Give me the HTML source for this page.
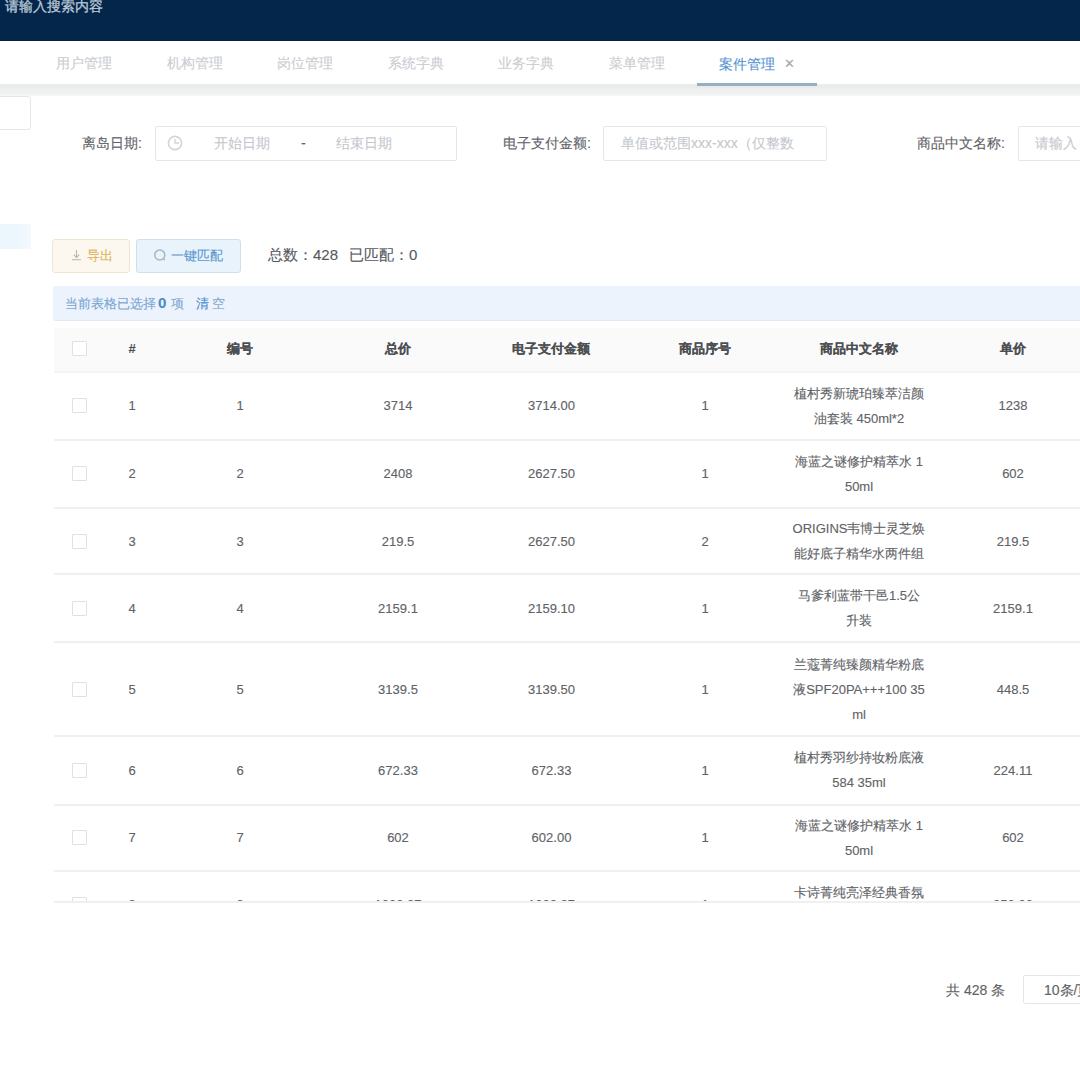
<!DOCTYPE html>
<html><head><meta charset="utf-8">
<style>
*{box-sizing:border-box;margin:0;padding:0}
html,body{width:1080px;height:1077px;overflow:hidden;background:#fff}

.a{-webkit-text-stroke:0.12px currentColor}
body{position:relative;font-family:"Liberation Sans",sans-serif;color:#606266}
.a{position:absolute;white-space:nowrap}
#hdr{left:0;top:0;width:1080px;height:41px;background:#03264a;border-bottom:1px solid #0d1f36}
#title{left:5px;top:-4px;font-size:14px;line-height:20px;color:#bac7d5;-webkit-text-stroke:0.3px #bac7d5}
#tabs{left:0;top:41px;width:1080px;height:43px;background:#fff}
.tab{top:54px;font-size:14px;line-height:18px;color:#cacdd2}
#strip{left:0;top:84px;width:1080px;height:12px;background:linear-gradient(#ebeced 0,#e9eaeb 25%,#eef0f0 45%,#f0f2f2 85%,#f7f8f8 100%)}
.inp{border:1px solid #e5e6e9;border-radius:2px;background:#fff}
.lbl{font-size:14px;line-height:18px;color:#5f6268}
.ph{font-size:14px;line-height:18px;color:#c5c8ce}
.btn{border-radius:3px;font-size:12px;line-height:16px}
#alert{left:53px;top:286px;width:1040px;height:35px;background:#ecf3fc;border-bottom:1px solid #e3e9f4;border-radius:3px}
.th{font-size:13px;font-weight:bold;color:#4d4f53;line-height:18px}
.td{font-size:13px;color:#606266;line-height:25px;text-align:center}
.rl{left:54px;width:1030px;height:2px;margin-top:-0.5px;background:#f0f0f2}
.cb{width:15px;height:15px;border:1px solid #e0e1e5;border-radius:1px;background:#fff}
</style></head><body>
<div id="hdr" class="a"></div>
<div id="title" class="a">请输入搜索内容</div>
<div id="tabs" class="a"></div>
<div class="a tab" style="left:55.5px">用户管理</div>
<div class="a tab" style="left:166.5px">机构管理</div>
<div class="a tab" style="left:276.5px">岗位管理</div>
<div class="a tab" style="left:388px">系统字典</div>
<div class="a tab" style="left:498px">业务字典</div>
<div class="a tab" style="left:609px">菜单管理</div>
<div class="a tab" style="left:719px;top:55px;color:#5593d3">案件管理</div>
<div class="a tab" style="left:784px;top:55px;color:#a3a8ae;font-size:13px">✕</div>
<div class="a" style="left:697px;top:82.5px;width:120px;height:3px;background:#98afc3;z-index:2"></div>
<div id="strip" class="a"></div>

<!-- sidebar bits -->
<div class="a inp" style="left:-6px;top:96px;width:36.5px;height:33.5px;border-radius:3px"></div>
<div class="a" style="left:0;top:224px;width:31px;height:25px;background:linear-gradient(to right,#ecf6fd 50%,#f3f9fe 100%)"></div>

<!-- filters -->
<div class="a lbl" style="left:82px;top:134px">离岛日期:</div>
<div class="a inp" style="left:155px;top:126px;width:302px;height:34.5px"></div>
<svg class="a" style="left:167px;top:135.3px" width="16" height="16" viewBox="0 0 16 16"><circle cx="8" cy="8" r="6.6" fill="none" stroke="#d3d5d9" stroke-width="1.6"/><path d="M8 4v4h4" fill="none" stroke="#d3d5d9" stroke-width="1.5"/></svg>
<div class="a ph" style="left:214px;top:134px">开始日期</div>
<div class="a ph" style="left:301px;top:134px;color:#606266">-</div>
<div class="a ph" style="left:336px;top:134px">结束日期</div>

<div class="a lbl" style="left:503px;top:134px">电子支付金额:</div>
<div class="a inp" style="left:603px;top:126px;width:224px;height:34.5px"></div>
<div class="a ph" style="left:621px;top:134px">单值或范围xxx-xxx（仅整数</div>

<div class="a lbl" style="left:917px;top:134px">商品中文名称:</div>
<div class="a inp" style="left:1018px;top:126px;width:80px;height:34.5px"></div>
<div class="a ph" style="left:1035px;top:134px">请输入</div>

<!-- buttons -->
<div class="a btn" style="left:52px;top:239px;width:78px;height:34px;background:#fdf8ef;border:1px solid #efe5d3"></div>
<svg class="a" style="left:71px;top:249px" width="11" height="12" viewBox="0 0 11 12"><path d="M5.5 1v7.5M2.8 5.6l2.7 2.9 2.7-2.9M1 10.8h9" fill="none" stroke="#bdb3a3" stroke-width="1.1"/></svg>
<div class="a btn" style="left:87px;top:247px;font-size:13px;line-height:17px;color:#dcb45e">导出</div>
<div class="a btn" style="left:136px;top:239px;width:105px;height:34px;background:#e9f3fb;border:1px solid #d3deec"></div>
<svg class="a" style="left:153px;top:247.5px" width="14" height="14" viewBox="0 0 14 14"><circle cx="6.8" cy="6.9" r="5" fill="none" stroke="#a5b7c7" stroke-width="1.5"/><path d="M10.3 10.4l1.6 1.6" stroke="#a5b7c7" stroke-width="1.5"/></svg>
<div class="a btn" style="left:171px;top:247px;font-size:13px;line-height:17px;color:#5896cf">一键匹配</div>
<div class="a" style="left:268px;top:245px;font-size:15px;line-height:19px;color:#55585e">总数：428</div>
<div class="a" style="left:349px;top:245px;font-size:15px;line-height:19px;color:#55585e">已匹配：0</div>

<!-- alert -->
<div id="alert" class="a"></div>
<div class="a" style="left:65px;top:295px;font-size:12.8px;line-height:17px;color:#79a6d2">当前表格已选择</div>
<div class="a" style="left:158px;top:294px;font-size:15px;line-height:18px;font-weight:bold;color:#4f8cc4">0</div>
<div class="a" style="left:171px;top:295px;font-size:12.8px;line-height:17px;color:#84a9cf">项</div>
<div class="a" style="left:196px;top:295px;font-size:12.8px;line-height:17px;color:#4a8cd0">清</div>
<div class="a" style="left:212px;top:295px;font-size:12.8px;line-height:17px;color:#84a9cf">空</div>

<!-- table -->
<div class="a" style="left:54px;top:328px;width:1040px;height:45px;background:#fafafa;border-bottom:2px solid #f4f4f5"></div>
<div class="a cb" style="left:72px;top:341px"></div>
<div class="a th" style="left:112px;width:40px;top:340px;text-align:center">#</div>
<div class="a th" style="left:180px;width:120px;top:340px;text-align:center">编号</div>
<div class="a th" style="left:318px;width:160px;top:340px;text-align:center">总价</div>
<div class="a th" style="left:471px;width:160px;top:340px;text-align:center">电子支付金额</div>
<div class="a th" style="left:625px;width:160px;top:340px;text-align:center">商品序号</div>
<div class="a th" style="left:779px;width:160px;top:340px;text-align:center">商品中文名称</div>
<div class="a th" style="left:933px;width:160px;top:340px;text-align:center">单价</div>

<div id="tbody" class="a" style="left:0;top:372px;width:1080px;height:530px;overflow:hidden">
<div class="a cb" style="left:72px;top:26.2px"></div>
<div class="a td" style="left:72.0px;width:120px;top:21.2px">1</div>
<div class="a td" style="left:180.0px;width:120px;top:21.2px">1</div>
<div class="a td" style="left:338.0px;width:120px;top:21.2px">3714</div>
<div class="a td" style="left:491.5px;width:120px;top:21.2px">3714.00</div>
<div class="a td" style="left:645.0px;width:120px;top:21.2px">1</div>
<div class="a td" style="left:779.0px;width:160px;top:8.8px">植村秀新琥珀臻萃洁颜<br>油套装 450ml*2</div>
<div class="a td" style="left:953.0px;width:120px;top:21.2px">1238</div>
<div class="a rl" style="top:67.0px"></div>
<div class="a cb" style="left:72px;top:94.2px"></div>
<div class="a td" style="left:72.0px;width:120px;top:89.2px">2</div>
<div class="a td" style="left:180.0px;width:120px;top:89.2px">2</div>
<div class="a td" style="left:338.0px;width:120px;top:89.2px">2408</div>
<div class="a td" style="left:491.5px;width:120px;top:89.2px">2627.50</div>
<div class="a td" style="left:645.0px;width:120px;top:89.2px">1</div>
<div class="a td" style="left:779.0px;width:160px;top:76.8px">海蓝之谜修护精萃水 1<br>50ml</div>
<div class="a td" style="left:953.0px;width:120px;top:89.2px">602</div>
<div class="a rl" style="top:135.5px"></div>
<div class="a cb" style="left:72px;top:161.5px"></div>
<div class="a td" style="left:72.0px;width:120px;top:156.5px">3</div>
<div class="a td" style="left:180.0px;width:120px;top:156.5px">3</div>
<div class="a td" style="left:338.0px;width:120px;top:156.5px">219.5</div>
<div class="a td" style="left:491.5px;width:120px;top:156.5px">2627.50</div>
<div class="a td" style="left:645.0px;width:120px;top:156.5px">2</div>
<div class="a td" style="left:779.0px;width:160px;top:144.0px">ORIGINS韦博士灵芝焕<br>能好底子精华水两件组</div>
<div class="a td" style="left:953.0px;width:120px;top:156.5px">219.5</div>
<div class="a rl" style="top:201.5px"></div>
<div class="a cb" style="left:72px;top:228.5px"></div>
<div class="a td" style="left:72.0px;width:120px;top:223.5px">4</div>
<div class="a td" style="left:180.0px;width:120px;top:223.5px">4</div>
<div class="a td" style="left:338.0px;width:120px;top:223.5px">2159.1</div>
<div class="a td" style="left:491.5px;width:120px;top:223.5px">2159.10</div>
<div class="a td" style="left:645.0px;width:120px;top:223.5px">1</div>
<div class="a td" style="left:779.0px;width:160px;top:211.0px">马爹利蓝带干邑1.5公<br>升装</div>
<div class="a td" style="left:953.0px;width:120px;top:223.5px">2159.1</div>
<div class="a rl" style="top:269.5px"></div>
<div class="a cb" style="left:72px;top:309.5px"></div>
<div class="a td" style="left:72.0px;width:120px;top:304.5px">5</div>
<div class="a td" style="left:180.0px;width:120px;top:304.5px">5</div>
<div class="a td" style="left:338.0px;width:120px;top:304.5px">3139.5</div>
<div class="a td" style="left:491.5px;width:120px;top:304.5px">3139.50</div>
<div class="a td" style="left:645.0px;width:120px;top:304.5px">1</div>
<div class="a td" style="left:779.0px;width:160px;top:279.5px">兰蔻菁纯臻颜精华粉底<br>液SPF20PA+++100 35<br>ml</div>
<div class="a td" style="left:953.0px;width:120px;top:304.5px">448.5</div>
<div class="a rl" style="top:363.5px"></div>
<div class="a cb" style="left:72px;top:390.8px"></div>
<div class="a td" style="left:72.0px;width:120px;top:385.8px">6</div>
<div class="a td" style="left:180.0px;width:120px;top:385.8px">6</div>
<div class="a td" style="left:338.0px;width:120px;top:385.8px">672.33</div>
<div class="a td" style="left:491.5px;width:120px;top:385.8px">672.33</div>
<div class="a td" style="left:645.0px;width:120px;top:385.8px">1</div>
<div class="a td" style="left:779.0px;width:160px;top:373.2px">植村秀羽纱持妆粉底液<br>584 35ml</div>
<div class="a td" style="left:953.0px;width:120px;top:385.8px">224.11</div>
<div class="a rl" style="top:432.0px"></div>
<div class="a cb" style="left:72px;top:458.2px"></div>
<div class="a td" style="left:72.0px;width:120px;top:453.2px">7</div>
<div class="a td" style="left:180.0px;width:120px;top:453.2px">7</div>
<div class="a td" style="left:338.0px;width:120px;top:453.2px">602</div>
<div class="a td" style="left:491.5px;width:120px;top:453.2px">602.00</div>
<div class="a td" style="left:645.0px;width:120px;top:453.2px">1</div>
<div class="a td" style="left:779.0px;width:160px;top:440.8px">海蓝之谜修护精萃水 1<br>50ml</div>
<div class="a td" style="left:953.0px;width:120px;top:453.2px">602</div>
<div class="a rl" style="top:498.5px"></div>
<div class="a cb" style="left:72px;top:525.0px"></div>
<div class="a td" style="left:72.0px;width:120px;top:520.0px">8</div>
<div class="a td" style="left:180.0px;width:120px;top:520.0px">8</div>
<div class="a td" style="left:338.0px;width:120px;top:520.0px">1003.27</div>
<div class="a td" style="left:491.5px;width:120px;top:520.0px">1003.27</div>
<div class="a td" style="left:645.0px;width:120px;top:520.0px">1</div>
<div class="a td" style="left:779.0px;width:160px;top:507.5px">卡诗菁纯亮泽经典香氛<br>洗发水套装</div>
<div class="a td" style="left:953.0px;width:120px;top:520.0px">250.00</div>
<div class="a rl" style="top:565.5px"></div>
</div>
<div class="a rl" style="top:901px"></div>

<!-- pagination -->
<div class="a" style="left:946px;top:982px;font-size:14px;line-height:17px;color:#606266">共 428 条</div>
<div class="a inp" style="left:1023px;top:975px;width:90px;height:29px"></div>
<div class="a" style="left:1044px;top:982px;font-size:14px;line-height:17px;color:#606266">10条/页</div>
</body></html>
